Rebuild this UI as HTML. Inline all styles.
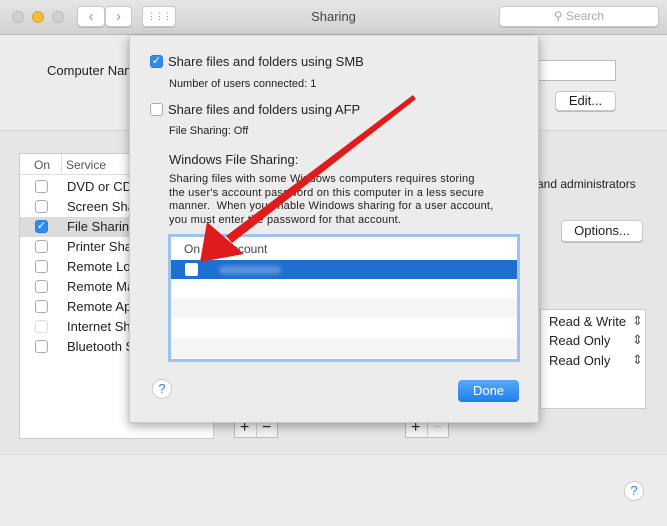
<!DOCTYPE html>
<html><head><style>
*{margin:0;padding:0;box-sizing:border-box}
body{width:667px;height:526px;overflow:hidden;background:#ececec;font-family:"Liberation Sans",sans-serif;font-size:13px;color:#222;position:relative}
.a{position:absolute}
.cb{position:absolute;width:13px;height:13px;border:1px solid #aaa;border-radius:3px;background:#fff}
.btn{position:absolute;background:#fff;border:1px solid #c8c8c8;border-radius:4px;text-align:center;box-shadow:0 1px 0 #bbb}
.row{position:absolute;left:0;width:194px;height:20px}
.row span{position:absolute;left:47px;top:2px;font-size:13px}
.row .cb{left:15px;top:3px}
</style></head><body>
<div class="a" style="left:0;top:0;width:667px;height:35px;background:linear-gradient(#e6e6e6,#d2d2d2);border-bottom:1px solid #b8b8b8"></div>
<div class="a" style="left:12px;top:11px;width:12px;height:12px;border-radius:50%;background:#d0d0d0;border:1px solid #bbb"></div>
<div class="a" style="left:32px;top:11px;width:12px;height:12px;border-radius:50%;background:#f5bd3a;border:1px solid #dca52a"></div>
<div class="a" style="left:52px;top:11px;width:12px;height:12px;border-radius:50%;background:#d0d0d0;border:1px solid #bbb"></div>
<div class="btn" style="left:77px;top:6px;width:28px;height:21px;color:#999;font-size:15px;line-height:19px">‹</div>
<div class="btn" style="left:105px;top:6px;width:27px;height:21px;color:#999;font-size:15px;line-height:19px">›</div>
<div class="btn" style="left:142px;top:6px;width:34px;height:21px;color:#888;font-size:9px;line-height:19px;letter-spacing:-1px">⋮⋮⋮</div>
<div class="a" style="left:0;width:667px;top:9px;text-align:center;font-size:13px;color:#444">Sharing</div>
<div class="btn" style="left:499px;top:6px;width:160px;height:21px;color:#aaa;font-size:12px;line-height:19px">⚲ Search</div>
<div class="a" style="left:47px;top:63px;font-size:13px">Computer Name:</div>
<div class="a" style="left:538px;top:60px;width:78px;height:21px;background:#fff;border:1px solid #bbb"></div>
<div class="btn" style="left:555px;top:91px;width:61px;height:20px;line-height:18px">Edit...</div>
<div class="a" style="left:0;top:130px;width:667px;height:325px;background:#e6e6e6;border-top:1px solid #d4d4d4;border-bottom:1px solid #d8d8d8"></div>
<div class="a" style="left:19px;top:153px;width:195px;height:286px;background:#fff;border:1px solid #ccc">
 <div class="a" style="left:14px;top:4px;color:#555;font-size:12px">On</div>
 <div class="a" style="left:46px;top:4px;color:#555;font-size:12px">Service</div>
 <div class="a" style="left:41px;top:0;width:1px;height:19px;background:#ddd"></div>
 <div class="a" style="left:0;top:20px;width:194px;height:1px;background:#ddd"></div>
 <div class="row" style="top:23px"><div class="cb"></div><span>DVD or CD</span></div>
 <div class="row" style="top:43px"><div class="cb"></div><span>Screen Sharing</span></div>
 <div class="row" style="top:63px;background:#dcdcdc"><div class="cb" style="background:#2f8cf0;border-color:#2a7bd4;color:#fff;font-size:11px;line-height:11px;text-align:center">✓</div><span>File Sharing</span></div>
 <div class="row" style="top:83px"><div class="cb"></div><span>Printer Sharing</span></div>
 <div class="row" style="top:103px"><div class="cb"></div><span>Remote Login</span></div>
 <div class="row" style="top:123px"><div class="cb"></div><span>Remote Management</span></div>
 <div class="row" style="top:143px"><div class="cb"></div><span>Remote Apple</span></div>
 <div class="row" style="top:163px"><div class="cb" style="border-color:#ddd"></div><span>Internet Sharing</span></div>
 <div class="row" style="top:183px"><div class="cb"></div><span>Bluetooth Sharing</span></div>
</div>
<div class="a" style="left:537px;top:177px;font-size:12px">and administrators</div>
<div class="btn" style="left:561px;top:220px;width:82px;height:22px;line-height:20px">Options...</div>
<div class="a" style="left:540px;top:309px;width:106px;height:100px;background:#fff;border:1px solid #ccc;font-size:13px">
 <div class="a" style="left:8px;top:4px">Read &amp; Write</div><div class="a" style="left:91px;top:3px;color:#555">⇕</div>
 <div class="a" style="left:8px;top:23px">Read Only</div><div class="a" style="left:91px;top:22px;color:#555">⇕</div>
 <div class="a" style="left:8px;top:43px">Read Only</div><div class="a" style="left:91px;top:42px;color:#555">⇕</div>
</div>
<div class="a" style="left:234px;top:418px;width:44px;height:20px;background:#f4f4f4;border:1px solid #bbb;font-size:16px;line-height:17px"><span style="position:absolute;left:5px">+</span><span style="position:absolute;left:21px;top:0;width:1px;height:18px;background:#ccc"></span><span style="position:absolute;left:27px">−</span></div>
<div class="a" style="left:405px;top:418px;width:44px;height:20px;background:#f4f4f4;border:1px solid #bbb;font-size:16px;line-height:17px"><span style="position:absolute;left:5px">+</span><span style="position:absolute;left:21px;top:0;width:1px;height:18px;background:#ccc"></span><span style="position:absolute;left:27px;color:#ccc">−</span></div>
<div class="a" style="left:624px;top:481px;width:20px;height:20px;border-radius:50%;background:#fff;border:1px solid #ccc;color:#2f7fe0;text-align:center;font-size:13px;line-height:18px">?</div>
<div class="a" style="left:129px;top:36px;width:410px;height:387px;background:#ececec;box-shadow:0 3px 10px rgba(0,0,0,.35);border:1px solid #c8c8c8;border-top:none">
 <div class="cb" style="left:20px;top:19px;background:#2f8cf0;border-color:#2a7bd4;color:#fff;font-size:11px;line-height:11px;text-align:center">✓</div>
 <div class="a" style="left:38px;top:18px;font-size:13px">Share files and folders using SMB</div>
 <div class="a" style="left:39px;top:42px;font-size:11px">Number of users connected: 1</div>
 <div class="cb" style="left:20px;top:67px"></div>
 <div class="a" style="left:38px;top:66px;font-size:13px">Share files and folders using AFP</div>
 <div class="a" style="left:39px;top:89px;font-size:11px">File Sharing: Off</div>
 <div class="a" style="left:39px;top:116px;font-size:13px">Windows File Sharing:</div>
 <div class="a" style="left:39px;top:137px;font-size:11px;line-height:13.7px;white-space:nowrap;letter-spacing:0.2px">Sharing files with some Windows computers requires storing<br>the user's account password on this computer in a less secure<br>manner.&nbsp; When you enable Windows sharing for a user account,<br>you must enter the password for that account.</div>
 <div class="a" style="left:38px;top:198px;width:352px;height:128px;background:#fff;border:3px solid #9cc3ee;overflow:hidden">
  <div class="a" style="left:13px;top:5px;font-size:12px;color:#444">On</div>
  <div class="a" style="left:53px;top:5px;font-size:12px;color:#444">Account</div>
  <div class="a" style="left:0;top:23px;width:352px;height:19px;background:#1d6fd0"></div>
  <div class="a" style="left:14px;top:26px;width:13px;height:13px;background:#fff;border-radius:2px"></div>
  <div class="a" style="left:48px;top:29px;width:62px;height:8px;background:#5f95dd;border-radius:4px;filter:blur(2px)"></div>
  <div class="a" style="left:0;top:61px;width:352px;height:20px;background:#f5f5f5"></div>
  <div class="a" style="left:0;top:101px;width:352px;height:20px;background:#f5f5f5"></div>
 </div>
 <div class="a" style="left:22px;top:343px;width:20px;height:20px;border-radius:50%;background:#fff;border:1px solid #ccc;color:#2f7fe0;text-align:center;font-size:13px;line-height:18px">?</div>
 <div class="a" style="left:328px;top:344px;width:61px;height:22px;border-radius:4px;background:linear-gradient(#5aa8f8,#1b7ff0);color:#fff;text-align:center;font-size:13px;line-height:22px">Done</div>
</div>
<svg class="a" style="left:0;top:0" width="667" height="526">
 <polygon points="413,95 416,99 232,243 226,236" fill="#e01b1b"/>
 <polygon points="200,262 207,222 244,254" fill="#e01b1b"/>
</svg>
</body></html>
